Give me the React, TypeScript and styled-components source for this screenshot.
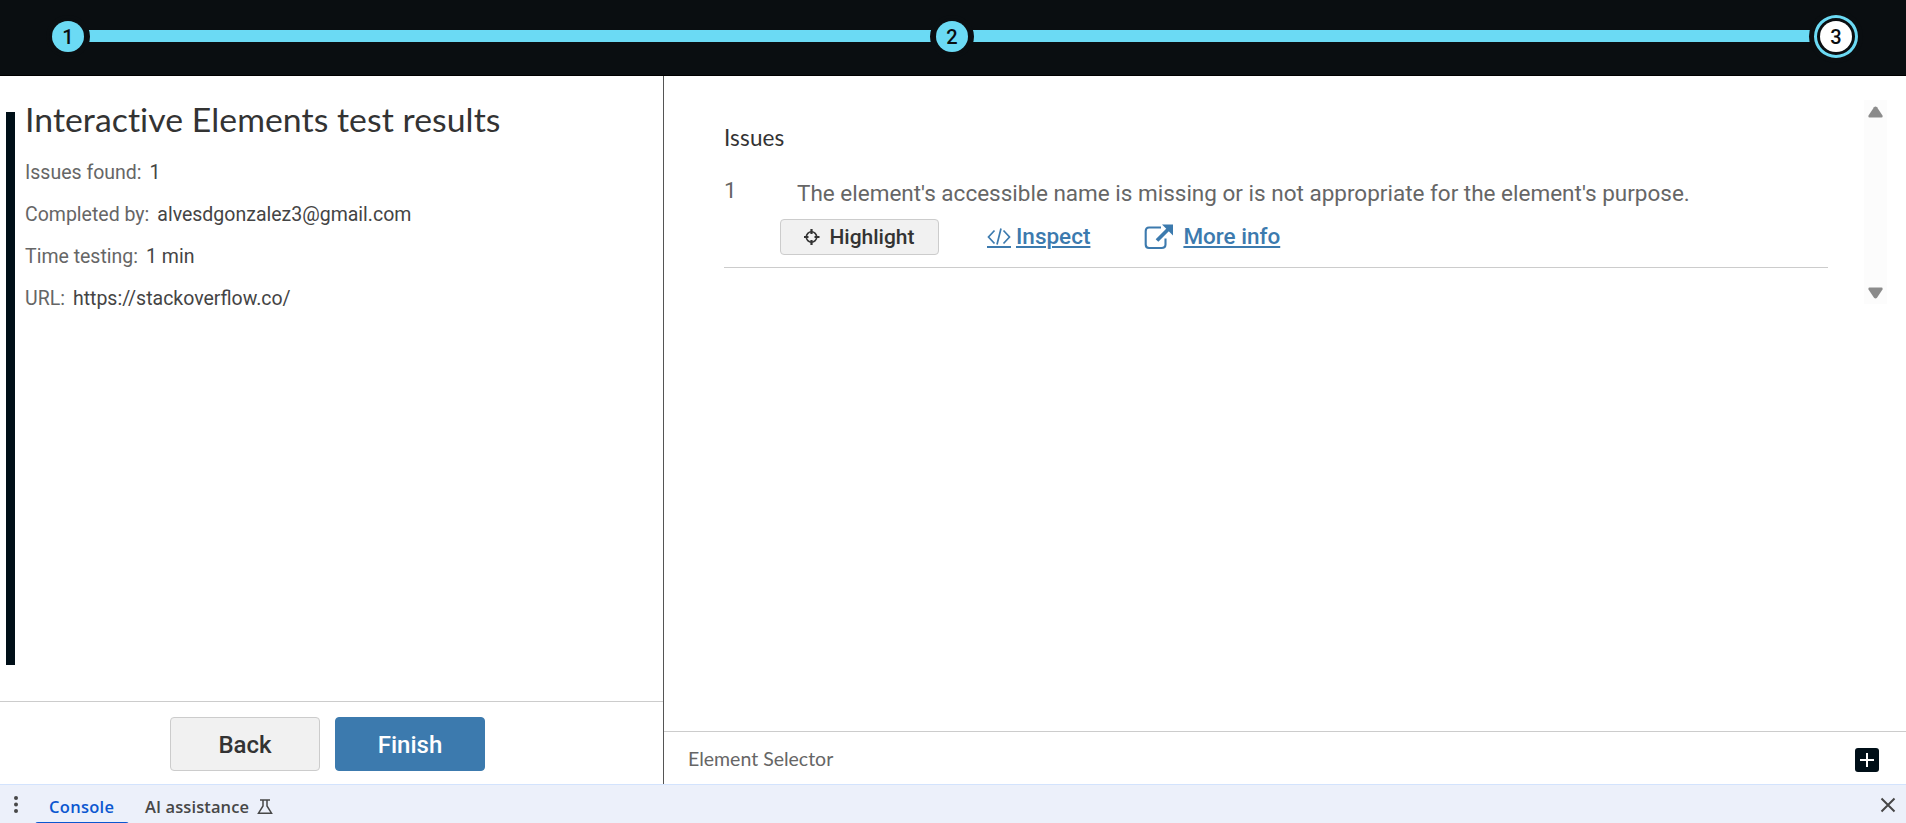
import React from "react";
import styled, { createGlobalStyle, css } from "styled-components";

const Global = createGlobalStyle`
  *, *::before, *::after { box-sizing: border-box; }
  body { margin: 0; background: #fff; font-family: Roboto, "Liberation Sans", sans-serif; }
  h1, h2, p, dl, dd, ol { margin: 0; padding: 0; }
  button { font-family: inherit; margin: 0; padding: 0; }
`;

const Page = styled.div`
  display: flex;
  flex-direction: column;
  width: 100%;
  height: 823px;
  overflow: hidden;
`;

const Header = styled.header`
  flex: none;
  display: flex;
  align-items: flex-start;
  height: 76px;
  padding: 15px 48px 0 46px;
  background: #0a0e11;
  border-bottom: 1px solid #000;
`;

const Step = styled.span<{ $current?: boolean }>`
  flex: none;
  display: flex;
  align-items: center;
  justify-content: center;
  width: 44px;
  height: 43px;
  border-radius: 50%;
  font-size: 20px;
  font-weight: 500;
  color: #0a0e11;
  background: #0a0e11;
  z-index: 1;
  border: 3px solid ${(p) => (p.$current ? "#6bdaf4" : "#0a0e11")};
  box-shadow: ${(p) => (p.$current ? "0 0 0 5px #0a0e11" : "none")};
`;

const Dot = styled.span<{ $current?: boolean }>`
  display: flex;
  align-items: center;
  justify-content: center;
  width: 32px;
  height: 31px;
  border-radius: 50%;
  background: ${(p) => (p.$current ? "#fff" : "#6bdaf4")};
`;

const Track = styled.span`
  flex: 1;
  height: 12px;
  margin: 15px -2px 0;
  background: #6bdaf4;
`;

const Body = styled.div`
  flex: none;
  display: flex;
  height: 708px;
`;

const Side = styled.aside`
  flex: none;
  display: flex;
  flex-direction: column;
  width: 664px;
  border-right: 1px solid #555;
`;

const Summary = styled.section`
  flex: 1;
  display: flex;
  padding: 36px 0 36px 6px;
`;

const Accent = styled.span`
  flex: none;
  width: 9px;
  background: #000f18;
`;

const SummaryText = styled.div`
  margin: -13px 0 0 10px;
`;

const Title = styled.h1`
  font: 400 33.75px/40px Lato, sans-serif;
  font-variant-ligatures: none;
  letter-spacing: 0.06px;
  color: #333;
  white-space: nowrap;
`;

const Facts = styled.dl`
  margin-top: 13px;
  font-size: 19.5px;
  line-height: 42px;
`;

const Fact = styled.div`
  display: flex;
  gap: 8px;
  height: 42px;
  color: #666;
  dd { color: #444; }
`;

const SideFooter = styled.footer`
  flex: none;
  display: flex;
  gap: 15px;
  height: 83px;
  padding: 15px 0 0 170px;
  border-top: 1px solid #ccc;
`;

const Button = styled.button<{ $primary?: boolean; $small?: boolean }>`
  display: flex;
  align-items: center;
  justify-content: center;
  width: ${(p) => (p.$small ? 159 : 150)}px;
  height: ${(p) => (p.$small ? 36 : 54)}px;
  padding-top: ${(p) => (p.$small ? 0 : 2)}px;
  gap: 9px;
  border: 1px solid #ccc;
  border-radius: 4px;
  background: #f1f1f1;
  color: #333;
  font-weight: 500;
  font-size: ${(p) => (p.$small ? 21 : 24)}px;
  ${(p) => p.$primary && css`
    background: #3c7aae;
    border-color: #3c7aae;
    color: #fff;
  `}
`;

const Main = styled.main`
  flex: 1;
  display: flex;
  flex-direction: column;
`;

const IssuePane = styled.div`
  flex: 1;
  display: flex;
  align-items: flex-start;
  padding: 24px 19px 0 60px;
`;

const Issues = styled.section`
  flex: 1;
  padding-top: 23px;
`;

const Heading = styled.h2`
  font: 400 22.5px/30px Lato, sans-serif;
  letter-spacing: 0.15px;
  color: #333;
`;

const Issue = styled.div`
  display: flex;
  height: 101px;
  margin-top: 14px;
  border-bottom: 1px solid #ccc;
  color: #666;
  font-size: 22.5px;
`;

const IssueNumber = styled.span`
  width: 56px;
  padding-top: 8px;
  line-height: 30px;
`;

const IssueText = styled.p`
  margin-left: 17px;
  padding-top: 11px;
  line-height: 30px;
  white-space: nowrap;
`;

const Actions = styled.div`
  display: flex;
  align-items: center;
  margin-top: 11px;
  height: 36px;
`;

const Link = styled.a<{ $left: number; $gap: number }>`
  display: flex;
  align-items: center;
  gap: ${(p) => p.$gap}px;
  margin-left: ${(p) => p.$left}px;
  color: #3c7aae;
  font-weight: 500;
  font-size: 22.5px;
  line-height: 30px;
  svg { flex: none; }
`;

const LinkText = styled.span`
  padding-bottom: 2px;
  text-decoration: underline;
  text-decoration-thickness: 2px;
  text-underline-offset: 2px;
  text-decoration-skip-ink: auto;
`;

const Scrollbar = styled.div`
  display: flex;
  flex-direction: column;
  justify-content: space-between;
  align-items: center;
  width: 23px;
  height: 204px;
  margin-left: 36px;
  padding: 6px 0 5px;
  background: #fcfcfc;
`;

const SelectorBar = styled.footer`
  flex: none;
  display: flex;
  align-items: flex-start;
  justify-content: space-between;
  height: 53px;
  padding: 15px 27px 0 24px;
  border-top: 1px solid #ccc;
  font: 400 19.5px/24px Lato, sans-serif;
  color: #666;
`;

const AddButton = styled.button`
  display: flex;
  width: 24px;
  height: 24px;
  margin-top: 1px;
  border: 0;
  border-radius: 3px;
  background: #000f18;
`;

const Drawer = styled.nav`
  flex: none;
  display: flex;
  align-items: stretch;
  height: 39px;
  border-top: 1px solid #d3e3fd;
  background: #ecf0fa;
  font: 600 16.5px/20px "Open Sans", "Noto Sans", sans-serif;
  color: #474747;
`;

const Kebab = styled.svg`
  margin: 10px 0 0 12px;
`;

const Tab = styled.span<{ $active?: boolean }>`
  flex: none;
  display: flex;
  gap: 8px;
  height: 38px;
  padding: 12px 15px 0 ${(p) => (p.$active ? 14 : 16)}px;
  letter-spacing: ${(p) => (p.$active ? 0.3 : 0.1)}px;
  color: ${(p) => (p.$active ? "#0b57d0" : "#474747")};
  svg { margin-top: 1px; }
`;

const ActiveTab = styled.div`
  display: flex;
  flex-direction: column;
  margin-left: 15px;
  width: 94px;
  height: 38px;
  overflow: hidden;
`;

const Underline = styled.span`
  flex: none;
  height: 3px;
  margin-top: -1px;
  border-radius: 3px 3px 0 0;
  background: #0b57d0;
`;

const Close = styled.svg`
  margin: 12px 10px 0 auto;
`;

const TargetIcon = () => (
  <svg width="16" height="16" viewBox="0 0 16 16" fill="none" stroke="#333">
    <circle cx="7.500" cy="8" r="5.200" strokeWidth="1.600" />
    <path d="M7.500 0v5M7.500 11v5M-.5 8h5M10.500 8h5" strokeWidth="2.200" />
  </svg>
);

const CodeIcon = () => (
  <svg width="24" height="26" viewBox="0 0 24 26" fill="none" stroke="#3c7aae" strokeWidth="1.700">
    <path d="M7.500 6.500L1.500 13l6 6.500M16.500 6.500l6 6.500-6 6.500M14 4.500l-4 16" />
    <path d="M0 23h24" strokeWidth="2" />
  </svg>
);

const ExternalIcon = () => (
  <svg width="29" height="26" viewBox="0 0 29 26" fill="none" stroke="#3c7aae">
    <path d="M17 3.500H5Q1.700 3.500 1.700 7V20.500Q1.700 24 5 24H17.500Q21.500 24 21.500 20.500V14.500" strokeWidth="2.100" />
    <path d="M13 16.500L24.500 5" strokeWidth="3.800" />
    <path d="M18 .5h11v11z" fill="#3c7aae" stroke="none" />
  </svg>
);

const Flask = () => (
  <svg width="16" height="18" viewBox="0 0 16 18" fill="none" stroke="#474747" strokeWidth="1.500">
    <path d="M3 2h10M6 2v6L1.500 15.200h13L10 8V2" />
  </svg>
);

const Arrow = ({ down }: { down?: boolean }) => (
  <svg width="15" height="12" viewBox="0 0 15 12" fill="#8b8b8b">
    <path
      transform={down ? "rotate(180 7.5 6)" : undefined}
      d="M6 1.200Q7.500-.3 9 1.200L14.500 9.500Q15 11.500 13.500 11.500H1.500Q0 11.500.5 9.500Z"
    />
  </svg>
);

const facts = [
  ["Issues found:", "1"],
  ["Completed by:", "alvesdgonzalez3@gmail.com"],
  ["Time testing:", "1 min"],
  ["URL:", "https://stackoverflow.co/"],
];

export default function App() {
  return (
    <Page>
      <Global />
      <Header>
        <Step><Dot>1</Dot></Step>
        <Track />
        <Step><Dot>2</Dot></Step>
        <Track />
        <Step $current><Dot $current>3</Dot></Step>
      </Header>
      <Body>
        <Side>
          <Summary>
            <Accent />
            <SummaryText>
              <Title>Interactive Elements test results</Title>
              <Facts>
                {facts.map(([label, value]) => (
                  <Fact key={label}><dt>{label}</dt><dd>{value}</dd></Fact>
                ))}
              </Facts>
            </SummaryText>
          </Summary>
          <SideFooter>
            <Button>Back</Button>
            <Button $primary>Finish</Button>
          </SideFooter>
        </Side>
        <Main>
          <IssuePane>
            <Issues>
              <Heading>Issues</Heading>
              <Issue>
                <IssueNumber>1</IssueNumber>
                <div>
                  <IssueText>The element's accessible name is missing or is not appropriate for the element's purpose.</IssueText>
                  <Actions>
                    <Button $small><TargetIcon />Highlight</Button>
                    <Link $left={48} $gap={5}><CodeIcon /><LinkText>Inspect</LinkText></Link>
                    <Link $left={54} $gap={10}><ExternalIcon /><LinkText>More info</LinkText></Link>
                  </Actions>
                </div>
              </Issue>
            </Issues>
            <Scrollbar><Arrow /><Arrow down /></Scrollbar>
          </IssuePane>
          <SelectorBar>
            <span>Element Selector</span>
            <AddButton aria-label="Expand">
              <svg width="24" height="24" viewBox="0 0 24 24" stroke="#fff" strokeWidth="2">
                <path d="M12 5v14M5 12h14" />
              </svg>
            </AddButton>
          </SelectorBar>
        </Main>
      </Body>
      <Drawer>
        <Kebab width="8" height="20" viewBox="0 0 8 20" fill="#474747">
          <circle cx="4" cy="3" r="2" /><circle cx="4" cy="9.500" r="2" /><circle cx="4" cy="16" r="2" />
        </Kebab>
        <ActiveTab>
          <Tab $active>Console</Tab>
          <Underline />
        </ActiveTab>
        <Tab>AI assistance<Flask /></Tab>
        <Close width="16" height="16" viewBox="0 0 16 16" stroke="#474747" strokeWidth="2">
          <path d="M1.500 1.500l13 13M14.500 1.500l-13 13" />
        </Close>
      </Drawer>
    </Page>
  );
}
